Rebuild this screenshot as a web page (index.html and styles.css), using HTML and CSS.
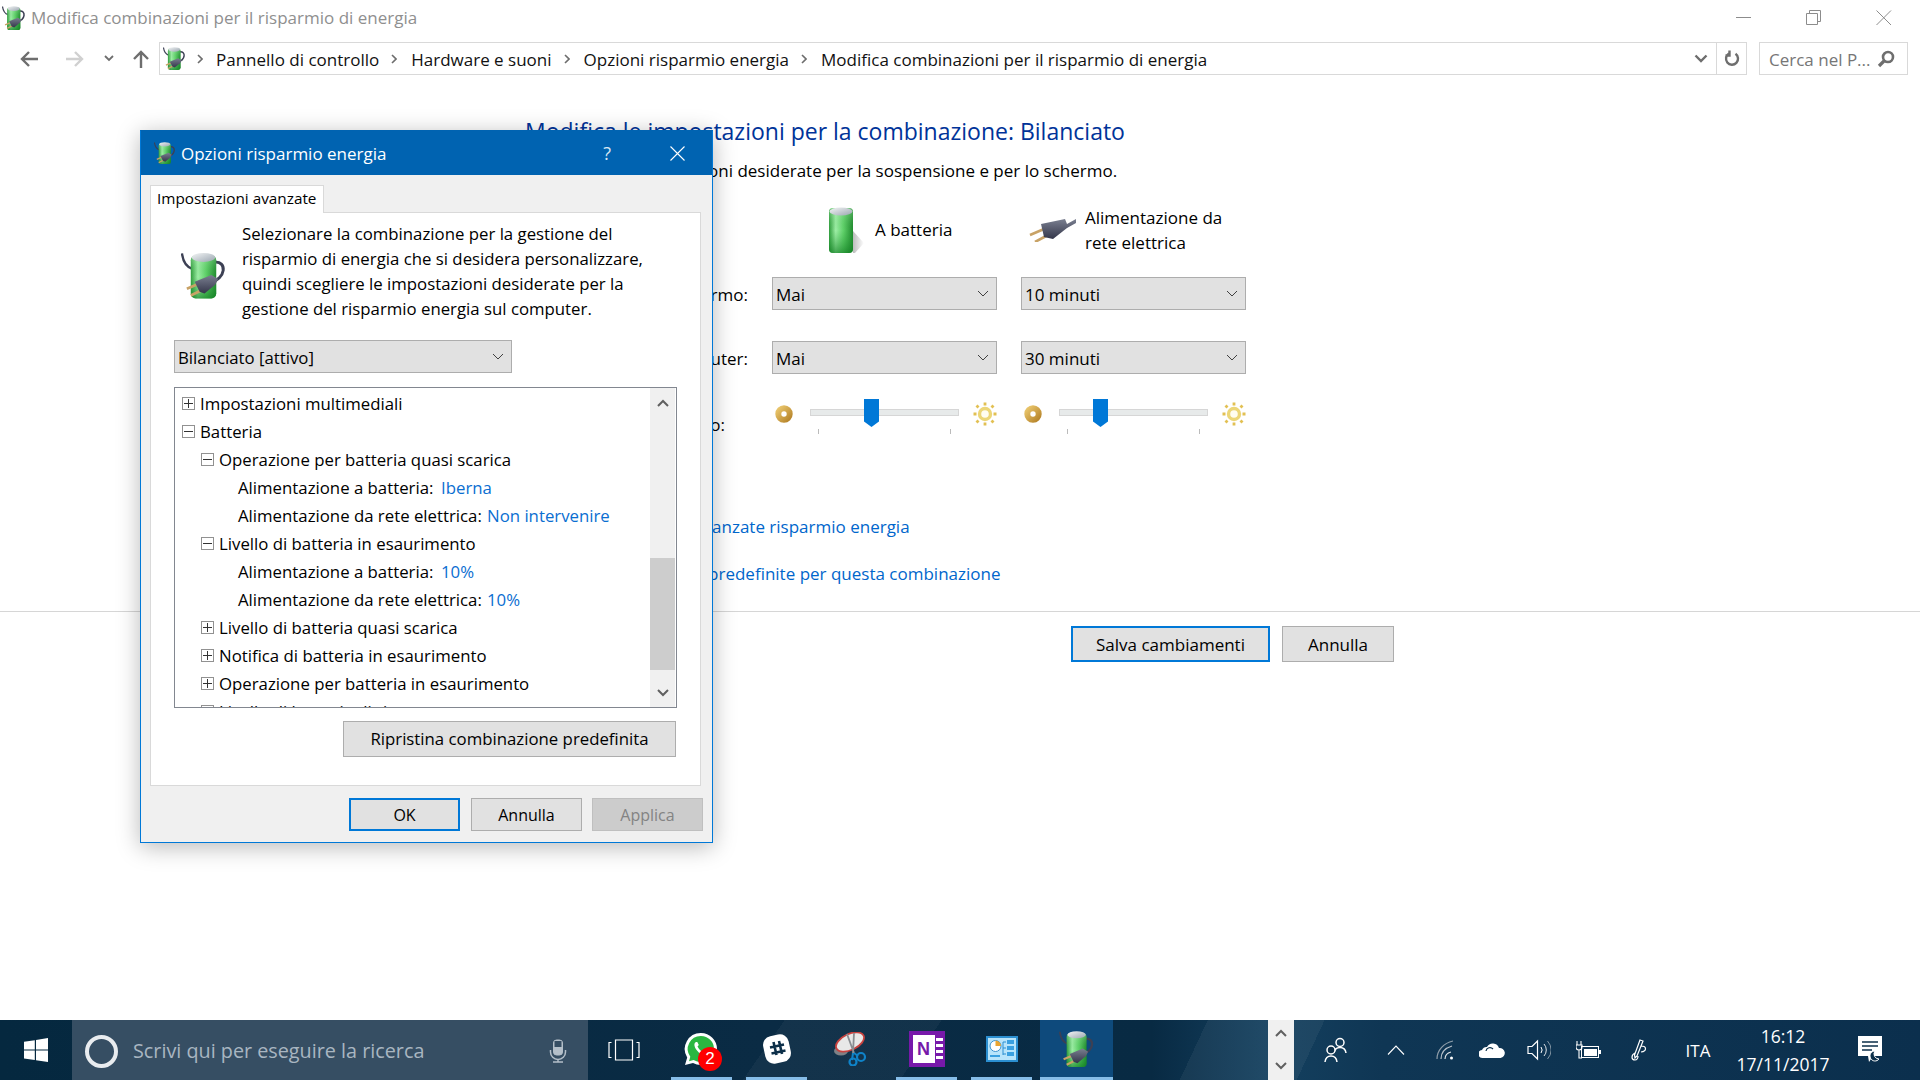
FILE: index.html
```html
<!DOCTYPE html>
<html lang="it">
<head>
<meta charset="utf-8">
<title>Modifica combinazioni per il risparmio di energia</title>
<link rel="stylesheet" href="styles.css">
</head>
<body>
<svg class="defs" aria-hidden="true">
  <defs>
    <linearGradient id="cell" x1="0" x2="1" y1="0" y2="0">
      <stop offset="0" stop-color="#2f9c3c"/><stop offset=".28" stop-color="#9eeea6"/><stop offset=".6" stop-color="#5fd069"/><stop offset="1" stop-color="#1f8a2d"/>
    </linearGradient>
    <linearGradient id="cellshade" x1="0" x2="0" y1="0" y2="1">
      <stop offset="0" stop-color="#d8ffd8" stop-opacity=".35"/><stop offset=".5" stop-color="#2aa23a" stop-opacity="0"/><stop offset="1" stop-color="#0d7a1f" stop-opacity=".65"/>
    </linearGradient>
    <linearGradient id="cap" x1="0" x2="1" y1="0" y2="1">
      <stop offset="0" stop-color="#f4f6f6"/><stop offset="1" stop-color="#9aa5b0"/>
    </linearGradient>
    <linearGradient id="plugbody" x1="0" x2="0" y1="0" y2="1">
      <stop offset="0" stop-color="#7a7f90"/><stop offset="1" stop-color="#34364a"/>
    </linearGradient>
    <linearGradient id="gold" x1="0" x2="1" y1="0" y2="1">
      <stop offset="0" stop-color="#e8c46a"/><stop offset="1" stop-color="#b8862c"/>
    </linearGradient>
    <linearGradient id="soft" x1="0" x2="1" y1="0" y2="0">
      <stop offset="0" stop-color="#bdbdbd"/><stop offset="1" stop-color="#fff"/>
    </linearGradient>
    <symbol id="power" viewBox="0 0 47 47">
      <path d="M1 1C2 9 6 15 12 17" fill="none" stroke="#3c4054" stroke-width="2.400"/>
      <path d="M34 10C47 8 47 27 29 31" fill="none" stroke="#3c4054" stroke-width="3"/>
      <rect x="10" y="3" width="26" height="44" rx="5" fill="url(#cell)"/>
      <rect x="10" y="3" width="26" height="44" rx="5" fill="url(#cellshade)"/>
      <ellipse cx="23" cy="5" rx="12" ry="4.600" fill="url(#cap)"/>
      <path d="M6 37L18 32M10 44L22 38" stroke="#c8a266" stroke-width="2.800"/>
      <path d="M14 30L31 23L38 27L35 33L24 42L19 40Z" fill="url(#plugbody)"/>
    </symbol>
    <symbol id="battery" viewBox="0 0 36 46">
      <path d="M25 24L36 36L27 46L25 46Z" fill="url(#soft)"/>
      <rect x="1" y="1" width="24" height="45" rx="4" fill="url(#cell)"/>
      <rect x="1" y="1" width="24" height="45" rx="4" fill="url(#cellshade)"/>
      <ellipse cx="13" cy="4.500" rx="11.500" ry="4" fill="url(#cap)"/>
    </symbol>
    <symbol id="plug" viewBox="0 0 47 24">
      <path d="M1 17L15 11M6 24L19 17" stroke="#c8a266" stroke-width="2.600"/>
      <path d="M12 6L36 1L38 6L47 1L47 5L38 10L24 21L15 19Z" fill="url(#plugbody)"/>
    </symbol>
    <symbol id="dim" viewBox="0 0 18 18">
      <circle cx="9" cy="9" r="5.700" fill="#fff" stroke="url(#gold)" stroke-width="6"/>
    </symbol>
    <symbol id="sun" viewBox="0 0 24 24">
      <circle cx="12" cy="12" r="5.500" fill="#fffdf0" stroke="#ecd677" stroke-width="3.400"/>
      <path d="M12 .5v3M12 20.500v3M.5 12h3M20.500 12h3M3.500 3.500l2 2M18.500 18.500l2 2M3.500 20.500l2-2M18.500 5.500l2-2" stroke="#e2c052" stroke-width="2.800"/>
    </symbol>
    <symbol id="caret" viewBox="0 0 12 7">
      <path d="M1 1l5 5 5-5" fill="none" stroke="#404040" stroke-width="1"/>
    </symbol>
    <symbol id="crumb" viewBox="0 0 6 10">
      <path d="M1 1l4 4-4 4" fill="none" stroke="#6d6d6d" stroke-width="1.600"/>
    </symbol>
    <symbol id="bold-up" viewBox="0 0 12 8">
      <path d="M1 7l5-5 5 5" fill="none" stroke="#606060" stroke-width="2"/>
    </symbol>
    <symbol id="bold-down" viewBox="0 0 12 8">
      <path d="M1 1l5 5 5-5" fill="none" stroke="#606060" stroke-width="2"/>
    </symbol>
  </defs>
</svg>

<div class="window">
  <header class="titlebar">
    <svg class="title-icon"><use href="#power"/></svg>
    <span class="title-text">Modifica combinazioni per il risparmio di energia</span>
    <div class="winctl">
      <svg class="ctl" viewBox="0 0 16 16"><path d="M0 7.500h15" stroke="#8c8c8c"/></svg>
      <svg class="ctl" viewBox="0 0 16 16"><path d="M.5 3.500h11v11H.5zM3.500 3.500V.5h11v11h-3" fill="none" stroke="#8c8c8c"/></svg>
      <svg class="ctl" viewBox="0 0 16 16"><path d="M.5.5l14.500 14.500M15 .5L.5 15" stroke="#8c8c8c"/></svg>
    </div>
  </header>

  <nav class="navbar">
    <svg class="nav-arrow back" viewBox="0 0 20 18"><path d="M19 9H3M10 2L3 9l7 7" fill="none" stroke="#6e6e6e" stroke-width="2.400"/></svg>
    <svg class="nav-arrow fwd" viewBox="0 0 20 18"><path d="M1 9h16M10 2l7 7-7 7" fill="none" stroke="#d0d0d0" stroke-width="2.400"/></svg>
    <svg class="nav-drop" viewBox="0 0 10 7"><path d="M1 1l4 4 4-4" fill="none" stroke="#6e6e6e" stroke-width="1.800"/></svg>
    <svg class="nav-up" viewBox="0 0 18 19"><path d="M9 19V3M2 10l7-7 7 7" fill="none" stroke="#6e6e6e" stroke-width="2.400"/></svg>
    <div class="addr">
      <svg class="addr-icon"><use href="#power"/></svg>
      <svg class="chev"><use href="#crumb"/></svg><span class="crumb">Pannello di controllo</span>
      <svg class="chev"><use href="#crumb"/></svg><span class="crumb">Hardware e suoni</span>
      <svg class="chev"><use href="#crumb"/></svg><span class="crumb">Opzioni risparmio energia</span>
      <svg class="chev"><use href="#crumb"/></svg><span class="crumb">Modifica combinazioni per il risparmio di energia</span>
      <svg class="addr-drop" viewBox="0 0 14 9"><path d="M1.500 1.500L7 7l5.500-5.500" fill="none" stroke="#6e6e6e" stroke-width="2.400"/></svg>
      <div class="addr-refresh">
        <svg class="refresh" viewBox="0 0 16 17"><path d="M5 3.500A6 6 0 1 0 11.500 3.800M5.500 .5v5h-4" fill="none" stroke="#6e6e6e" stroke-width="2.400"/></svg>
      </div>
    </div>
    <div class="search">
      <span class="search-text">Cerca nel P...</span>
      <svg class="search-icon" viewBox="0 0 18 18"><circle cx="11" cy="7" r="5" fill="none" stroke="#6e6e6e" stroke-width="2.600"/><path d="M7 11l-5 5" stroke="#6e6e6e" stroke-width="3.200"/></svg>
    </div>
  </nav>

  <main class="content">
    <h1 class="heading">Modifica le impostazioni per la combinazione: Bilanciato</h1>
    <p class="lead">Scegliere le impostazioni desiderate per la sospensione e per lo schermo.</p>
    <div class="plan">
      <div></div>
      <div class="head head-batt"><svg class="ico-batt"><use href="#battery"/></svg><span class="head-batt-text">A batteria</span></div>
      <div class="head head-plug"><svg class="ico-plug"><use href="#plug"/></svg><span>Alimentazione da<br>rete elettrica</span></div>

      <div class="plan-label">Disattiva schermo:</div>
      <div class="combo"><span>Mai</span><svg class="caret"><use href="#caret"/></svg></div>
      <div class="combo"><span>10 minuti</span><svg class="caret"><use href="#caret"/></svg></div>

      <div class="plan-label">Sospensione computer:</div>
      <div class="combo"><span>Mai</span><svg class="caret"><use href="#caret"/></svg></div>
      <div class="combo"><span>30 minuti</span><svg class="caret"><use href="#caret"/></svg></div>

      <div class="plan-label plan-label-low">Luminosità del piano:</div>
      <div class="bright">
        <svg class="ico-dim"><use href="#dim"/></svg>
        <div class="track"><i class="thumb thumb-a"></i><i class="tick tick-l"></i><i class="tick tick-r"></i></div>
        <svg class="ico-sun"><use href="#sun"/></svg>
      </div>
      <div class="bright">
        <svg class="ico-dim"><use href="#dim"/></svg>
        <div class="track"><i class="thumb thumb-b"></i><i class="tick tick-l"></i><i class="tick tick-r"></i></div>
        <svg class="ico-sun"><use href="#sun"/></svg>
      </div>
    </div>
    <a class="link link-a">Modifica impostazioni avanzate risparmio energia</a>
    <a class="link link-b">Ripristina impostazioni predefinite per questa combinazione</a>
  </main>

  <footer class="actions">
    <button class="btn btn-default btn-save">Salva cambiamenti</button>
    <button class="btn btn-cancel">Annulla</button>
  </footer>
</div>

<section class="dialog">
  <div class="dlg-title">
    <svg class="dlg-icon"><use href="#power"/></svg>
    <span class="dlg-name">Opzioni risparmio energia</span>
    <span class="dlg-help">?</span>
    <svg class="dlg-close" viewBox="0 0 15 15"><path d="M.5.5l14 14M14.500 .5l-14 14" stroke="#fff" stroke-width="1.100"/></svg>
  </div>
  <div class="dlg-body">
    <div class="tab">Impostazioni avanzate</div>
    <div class="panel">
      <div class="intro">
        <svg class="intro-icon"><use href="#power"/></svg>
        <p class="intro-text">Selezionare la combinazione per la gestione del<br>risparmio di energia che si desidera personalizzare,<br>quindi scegliere le impostazioni desiderate per la<br>gestione del risparmio energia sul computer.</p>
      </div>
      <div class="combo combo-plan"><span>Bilanciato [attivo]</span><svg class="caret"><use href="#caret"/></svg></div>
      <div class="tree">
        <div class="tree-list">
          <div class="row"><i class="exp plus"></i>Impostazioni multimediali</div>
          <div class="row"><i class="exp"></i>Batteria</div>
          <div class="row lvl2"><i class="exp"></i>Operazione per batteria quasi scarica</div>
          <div class="row lvl3"><span class="key key-a">Alimentazione a batteria:</span><span class="val">Iberna</span></div>
          <div class="row lvl3"><span class="key key-b">Alimentazione da rete elettrica:</span><span class="val">Non intervenire</span></div>
          <div class="row lvl2"><i class="exp"></i>Livello di batteria in esaurimento</div>
          <div class="row lvl3"><span class="key key-a">Alimentazione a batteria:</span><span class="val">10%</span></div>
          <div class="row lvl3"><span class="key key-b">Alimentazione da rete elettrica:</span><span class="val">10%</span></div>
          <div class="row lvl2"><i class="exp plus"></i>Livello di batteria quasi scarica</div>
          <div class="row lvl2"><i class="exp plus"></i>Notifica di batteria in esaurimento</div>
          <div class="row lvl2"><i class="exp plus"></i>Operazione per batteria in esaurimento</div>
          <div class="row lvl2"><i class="exp plus"></i>Livello di batteria di riserva</div>
        </div>
        <div class="vscroll">
          <div class="vs-up"><svg class="vs-arrow"><use href="#bold-up"/></svg></div>
          <div class="vs-thumb"></div>
          <div class="vs-down"><svg class="vs-arrow"><use href="#bold-down"/></svg></div>
        </div>
      </div>
      <button class="btn btn-restore">Ripristina combinazione predefinita</button>
    </div>
    <div class="dlg-actions">
      <button class="btn btn-default btn-dlg btn-ok">OK</button>
      <button class="btn btn-dlg">Annulla</button>
      <button class="btn btn-dlg btn-disabled">Applica</button>
    </div>
  </div>
</section>

<div class="taskbar">
  <div class="start">
    <svg class="win-logo" viewBox="0 0 24 24"><path d="M0 3.800L10.800 2.200V11.500H0zM12 2L24 0V11.500H12zM0 12.600H10.800V22L0 20.400zM12 12.600H24V24L12 22.200z" fill="#fff"/></svg>
  </div>
  <div class="tb-search">
    <i class="cortana"></i>
    <span class="tb-search-text">Scrivi qui per eseguire la ricerca</span>
    <svg class="mic" viewBox="0 0 18 24"><rect x="4.500" y="1" width="9" height="15" rx="3" fill="#b4bfc9" stroke="#b4bfc9"/><rect x="5.500" y="2" width="7" height="6" fill="#364e63"/><path d="M1.500 11v2a7.500 7.500 0 0 0 15 0v-2M9 20.500V23M4 23h10" fill="none" stroke="#b4bfc9" stroke-width="1.500"/></svg>
  </div>
  <div class="taskview">
    <svg class="tv-icon" viewBox="0 0 32 22"><path d="M3.500 3.500H1V18.500H3.500M28.500 3.500H31V18.500H28.500M7.500 1H24.500V21H7.500Z" fill="none" stroke="#fff" stroke-width="1.200"/></svg>
  </div>
  <div class="tiles">
    <div class="tile open">
      <svg class="t-wa" viewBox="0 0 34 34"><path d="M17 1a16 16 0 0 1 0 32c-3 0-5.500-.8-8-2L1 33l2.200-7.500A16 16 0 0 1 17 1z" fill="#fff"/><path d="M17 4a13 13 0 0 1 0 26c-2.800 0-5-.7-7.400-2L5 29.300l1.300-4.600A13 13 0 0 1 17 4z" fill="#2bb741"/><path d="M12 10c-2 1-2.500 4 1 8.500s7.500 6 9.500 4.500c1.500-1 1.500-2.500 1-3l-3-1.500-1.500 1.500c-1.500-.3-4.500-3.300-5.500-5.500l1.300-1.500-1.500-3z" fill="#fff"/></svg>
      <span class="badge">2</span>
    </div>
    <div class="tile open">
      <svg class="t-slack" viewBox="0 0 28 34"><rect x="1" y="3" width="26" height="28" rx="9" fill="#fff" transform="rotate(-12 14 17)"/><path d="M10.500 10l3 13M16 9l3 13M7 15.500l14-3M8.500 21.500l14-3" stroke="#0c2f49" stroke-width="2.600"/></svg>
    </div>
    <div class="tile plain">
      <svg class="t-snip" viewBox="0 0 33 34"><ellipse cx="7" cy="19" rx="7" ry="4.500" fill="#7e8186"/><ellipse cx="16" cy="10" rx="15" ry="8" transform="rotate(-25 16 10)" fill="#e8e8e8" stroke="#c8423f" stroke-width="1.800"/><path d="M13 2l7 19M20 1l-1 20" stroke="#8a8d92" stroke-width="1.800"/><path d="M20 21l4 3M19 21l-1 7" stroke="#0f83c9" stroke-width="2"/><circle cx="27" cy="25" r="4" fill="none" stroke="#0f83c9" stroke-width="2.200"/><circle cx="19" cy="30" r="3.500" fill="none" stroke="#0f83c9" stroke-width="2.200"/></svg>
    </div>
    <div class="tile open">
      <div class="t-one"><span class="one-page">N</span><i class="one-tabs"></i></div>
    </div>
    <div class="tile open">
      <svg class="t-cp" viewBox="0 0 32 26"><rect x="1" y="1" width="30" height="24" fill="#b7e4fb" stroke="#2b8fd1" stroke-width="2"/><circle cx="9.500" cy="10" r="5.500" fill="#fff" stroke="#3b92cf"/><path d="M9.500 10V4.500A5.500 5.500 0 0 1 15 10z" fill="#eaa531"/><path d="M17 6h3M17 6v13M17 12h3M17 18h3" stroke="#2b8fd1"/><rect x="21" y="4" width="7" height="4" fill="#3aa0e0"/><rect x="21" y="10" width="7" height="4" fill="#3aa0e0"/><rect x="21" y="16" width="7" height="4" fill="#3aa0e0"/><rect x="4" y="19" width="10" height="2" fill="#3aa0e0"/></svg>
    </div>
    <div class="tile open active">
      <svg class="t-power"><use href="#power"/></svg>
    </div>
  </div>
  <div class="tb-scroll">
    <svg class="tb-arrow"><use href="#bold-up"/></svg>
    <svg class="tb-arrow"><use href="#bold-down"/></svg>
  </div>
  <div class="tray">
    <div class="tr w60"><svg class="i-people" viewBox="0 0 24 26"><circle cx="16" cy="5.500" r="4" fill="none" stroke="#fff" stroke-width="1.500"/><path d="M10 16c.5-4 2-5.500 6-5.500s5.500 1.500 6 5.500" fill="none" stroke="#fff" stroke-width="1.500"/><circle cx="7" cy="13" r="4" fill="#0c2f49" stroke="#fff" stroke-width="1.500"/><path d="M1 25c.5-4 2-6 6-6s5.500 2 6 6" fill="none" stroke="#fff" stroke-width="1.500"/></svg></div>
    <div class="tr w60"><svg class="i-up" viewBox="0 0 18 10"><path d="M1 9.500l8-8.500 8 8.500" fill="none" stroke="#fff" stroke-width="1.100"/></svg></div>
    <div class="tr w38"><svg class="i-wifi" viewBox="0 0 18 20"><path d="M1 19C1 10 8 3 17 1" fill="none" stroke="#8f9eaa" stroke-width="1.200"/><path d="M5 19C5 13 9 8 16 6" fill="none" stroke="#b7c1ca" stroke-width="1.200"/><path d="M9 19c0-3 2-6 6-7" fill="none" stroke="#dfe4e8" stroke-width="1.200"/><circle cx="15.500" cy="18" r="1.500" fill="#fff"/></svg></div>
    <div class="tr w56"><svg class="i-cloud" viewBox="0 0 26 18"><path d="M4 17a4 4 0 0 1-1-8 5 5 0 0 1 5-3A6.500 6.500 0 0 1 20 7a5 5 0 0 1 1.500 10z" fill="#fff"/><path d="M7 10a4 4 0 0 1 7-2" fill="none" stroke="#0c2f49" stroke-width="1.200"/></svg></div>
    <div class="tr w38"><svg class="i-sound" viewBox="0 0 24 22"><path d="M1 7.500H5L10.500 2V20L5 14.500H1Z" fill="none" stroke="#fff" stroke-width="1.200"/><path d="M14 8a5 5 0 0 1 0 6" fill="none" stroke="#fff"/><path d="M17 5a9 9 0 0 1 0 12" fill="none" stroke="#dfe4e8"/><path d="M20.500 2a13 13 0 0 1 0 18" fill="none" stroke="#8395a4"/></svg></div>
    <div class="tr w60"><svg class="i-batt" viewBox="0 0 25 20"><rect x="5.500" y="6.500" width="17" height="11" fill="none" stroke="#fff"/><rect x="8" y="9" width="13" height="7" fill="#fff"/><rect x="23" y="10" width="2" height="4" fill="#fff"/><path d="M1 1v4M5 1v4M0 5h6v2a3 3 0 0 1-6 0zM3 10v8h3" fill="none" stroke="#fff" stroke-width="1.100"/></svg></div>
    <div class="tr w42"><svg class="i-pen" viewBox="0 0 16 22"><path d="M9 1l3 1-6 15-2 2-.5-3zM10 7c6 0 6 5 0 6M4 14c-4 2-4 7 0 7 2 0 3-2 3-4" fill="none" stroke="#fff" stroke-width="1.200"/></svg></div>
    <div class="tr w76 tr-text">ITA</div>
    <div class="tr w94 clock"><span>16:12</span><span>17/11/2017</span></div>
    <div class="tr w80"><svg class="i-action" viewBox="0 0 24 28"><path d="M0 0H24V20H15L11 26 10 20H0Z" fill="#fff"/><path d="M4 6H20M4 10H20M4 14H14" stroke="#0c2f49" stroke-width="1.300"/><path d="M17 15a5 5 0 1 0 4 8 5 5 0 0 1-4-8z" fill="#0c2f49" stroke="#fff"/></svg></div>
  </div>
</div>
</body>
</html>
```
FILE: styles.css
```css
* { box-sizing: border-box; }
html, body { margin: 0; height: 100%; }
body {
  width: 1920px; height: 1080px; overflow: hidden; position: relative;
  display: flex; flex-direction: column; background: #fff; color: #000;
  font: 17px/25px "Open Sans", "Noto Sans", sans-serif;
}
.defs { display: block; width: 0; height: 0; }
svg { display: block; flex: none; }
p, h1 { margin: 0; }

/* main window */
.window { height: 1020px; display: flex; flex-direction: column; }
.titlebar { height: 36px; display: flex; align-items: center; padding-left: 2px; flex: none; }
.title-icon { width: 24px; height: 24px; }
.title-text { margin: -1px 0 0 5px; color: #8f8f8f; }
.winctl { margin-left: auto; display: flex; gap: 54px; padding-right: 28px; }
.ctl { width: 16px; height: 16px; }

.navbar { height: 33px; margin-top: 6px; display: flex; align-items: center; padding-left: 19px; flex: none; }
.nav-arrow { width: 20px; height: 18px; }
.fwd { margin-left: 26px; }
.nav-drop { width: 10px; height: 7px; margin-left: 19px; }
.nav-up { width: 18px; height: 19px; margin-left: 18px; }
.addr { width: 1588px; height: 33px; margin-left: 9px; border: 1px solid #d9d9d9; display: flex; align-items: center; padding-left: 3px; }
.addr-icon { width: 23px; height: 23px; }
.chev { width: 6px; height: 10px; margin: 0 14px 0 12px; }
.addr-icon + .chev { margin: 0 13px 0 11px; }
.crumb { color: #111; padding-top: 1px; }
.addr-drop { width: 14px; height: 9px; margin-left: auto; margin-right: 8px; }
.addr-refresh { width: 30px; height: 100%; border-left: 1px solid #d9d9d9; display: flex; align-items: center; justify-content: center; }
.refresh { width: 16px; height: 17px; }
.search { width: 149px; height: 33px; margin-left: 12px; border: 1px solid #d9d9d9; display: flex; align-items: center; padding: 0 12px 0 9px; justify-content: space-between; }
.search-text { color: #767676; white-space: nowrap; padding-top: 1px; }
.search-icon { width: 18px; height: 18px; }

.content { height: 536px; padding-top: 40px; padding-left: 525px; flex: none; }
.heading { font-size: 23px; line-height: 32px; font-weight: 400; color: #003399; }
.lead { margin-top: 12px; line-height: 24px; margin-left: 13px; }
.plan { margin-top: 18px; display: grid; grid-template-columns: 223px 225px 225px; column-gap: 24px; grid-template-rows: 76px 64px 58px 116px; }
.head { height: 58px; display: flex; align-items: center; }
.head-batt { padding-left: 56px; gap: 11px; }
.head-batt-text { margin-top: -2px; }
.head-plug { padding-left: 8px; gap: 9px; }
.ico-batt { width: 36px; height: 46px; }
.ico-plug { width: 47px; height: 24px; }
.plan-label { text-align: right; line-height: 35px; white-space: nowrap; }
.plan-label-low { padding-right: 23px; line-height: 52px; }
.combo { height: 33px; background: #e1e1e1; border: 1px solid #adadad; display: flex; align-items: center; justify-content: space-between; padding: 1px 7px 0 3px; }
.caret { width: 12px; height: 7px; margin-top: -1px; }
.bright { display: flex; align-items: flex-start; height: 36px; }
.ico-dim { width: 18px; height: 18px; margin: 6px 0 0 3px; }
.ico-sun { width: 24px; height: 24px; margin: 3px 0 0 14px; }
.track { width: 149px; height: 7px; margin: 10px 0 0 17px; background: #e7eaea; border: 1px solid #d6d6d6; position: relative; }
.thumb { position: absolute; top: -11px; width: 15px; height: 28px; background: #0078d7; clip-path: polygon(0 0, 100% 0, 100% 80%, 50% 100%, 0 80%); }
.thumb-a { left: 53px; }
.thumb-b { left: 33px; }
.tick { position: absolute; top: 19px; width: 1px; height: 5px; background: #bbb; }
.tick-l { left: 7px; }
.tick-r { left: 139px; }
.link { display: block; color: #0066cc; line-height: 24px; }
.link-a { margin-left: -9px; }
.link-b { margin-top: 23px; margin-left: -2px; }
.actions { height: 448px; border-top: 1px solid #d6d6d6; padding: 14px 0 0 1071px; display: flex; align-items: flex-start; gap: 12px; }
.btn { font: inherit; color: #000; background: #e1e1e1; border: 1px solid #adadad; padding: 1px 0 0; height: 33px; line-height: 1; }
.btn-default { border: 2px solid #0078d7; }
.btn-save { width: 199px; height: 36px; }
.btn-cancel { width: 112px; height: 36px; }

/* dialog */
.dialog { position: absolute; left: 140px; top: 130px; width: 573px; height: 713px; background: #f0f0f0; border: 1px solid #0078d7; border-top-color: #0063b1; box-shadow: 0 4px 22px rgba(0,0,0,.28); display: flex; flex-direction: column; }
.dlg-title { height: 44px; background: #0063b1; display: flex; align-items: center; padding-left: 13px; color: #fff; flex: none; }
.dlg-icon { width: 22px; height: 24px; }
.dlg-name { margin-left: 5px; }
.dlg-help { margin-left: auto; margin-right: 59px; font-size: 18px; color: #d9e7f3; }
.dlg-close { width: 15px; height: 15px; margin-right: 27px; }
.dlg-body { padding: 10px 9px 0 9px; flex: 1; display: flex; flex-direction: column; }
.tab { width: 174px; height: 28px; background: #fff; border: 1px solid #d9d9d9; border-bottom: 0; line-height: 24px; font-size: 15.3px; padding-left: 6px; position: relative; z-index: 1; margin-bottom: -1px; white-space: nowrap; }
.panel { width: 551px; height: 574px; background: #fff; border: 1px solid #d9d9d9; padding: 8px 23px 0 23px; display: flex; flex-direction: column; font-size: 16.8px; }
.intro { display: flex; padding-left: 7px; gap: 15px; height: 100px; }
.intro-icon { width: 46px; height: 47px; margin-top: 31px; }
.intro-text { white-space: nowrap; }
.combo-plan { width: 338px; height: 33px; margin-top: 19px; }
.tree { width: 503px; height: 321px; margin-top: 14px; border: 1px solid #828790; display: flex; overflow: hidden; flex: none; }
.tree-list { flex: 1; padding: 1px 0 0 7px; overflow: hidden; }
.row { height: 28px; display: flex; align-items: center; white-space: nowrap; }
.lvl2 { padding-left: 19px; }
.lvl3 { padding-left: 56px; }
.exp { width: 13px; height: 13px; border: 1px solid #919191; position: relative; margin-right: 5px; flex: none; }
.exp::before { content: ""; position: absolute; left: 1px; right: 1px; top: 5px; height: 1px; background: #333; }
.plus::after { content: ""; position: absolute; top: 1px; bottom: 1px; left: 5px; width: 1px; background: #333; }
.key { flex: none; }
.key-a { width: 203px; }
.key-b { width: 249px; }
.val { color: #0a6ed1; }
.vscroll { width: 25px; background: #f0f0f0; display: flex; flex-direction: column; flex: none; margin-right: 1px; }
.vs-up { height: 32px; display: flex; align-items: center; justify-content: center; padding-bottom: 2px; }
.vs-thumb { height: 112px; background: #cdcdcd; margin-top: 138px; flex: none; }
.vs-down { flex: 1; display: flex; align-items: center; justify-content: center; padding-top: 8px; }
.vs-arrow { width: 12px; height: 8px; }
.btn-restore { width: 333px; height: 36px; margin-top: 13px; margin-left: 169px; flex: none; }
.dlg-actions { display: flex; justify-content: flex-end; gap: 10px; margin-top: 12px; }
.btn-dlg { width: 111px; height: 33px; font-size: 16px; padding-top: 0; }
.btn-ok { margin-right: 1px; }
.btn-disabled { background: #ccc; border-color: #bfbfbf; color: #838383; }

/* taskbar */
.taskbar {
  height: 60px; display: flex; flex: none; color: #fff;
  background:
    linear-gradient(115deg, rgba(255,255,255,0) 0 62%, rgba(255,255,255,.05) 62% 68%, rgba(255,255,255,0) 68%),
    linear-gradient(125deg, rgba(255,255,255,0) 0 40%, rgba(255,255,255,.04) 40% 48%, rgba(255,255,255,0) 48%),
    linear-gradient(90deg, #05283f 0, #0a2b44 40%, #082a43 60%, #14405f 66%, #0f3654 72%, #0b2f4d 100%);
}
.start { width: 72px; display: flex; align-items: center; justify-content: center; }
.win-logo { width: 24px; height: 24px; }
.tb-search { width: 516px; background: #364e63; display: flex; align-items: center; padding-left: 13px; }
.cortana { width: 33px; height: 33px; border-radius: 50%; border: 4px solid #e9ecef; margin-top: 3px; flex: none; }
.tb-search-text { margin-left: 15px; color: #a9b6c1; font-size: 19.8px; margin-top: 1px; white-space: nowrap; }
.mic { width: 18px; height: 24px; margin-left: auto; margin-right: 21px; margin-top: 1px; }
.taskview { width: 72px; display: flex; align-items: center; justify-content: center; }
.tv-icon { width: 32px; height: 22px; }
.tiles { display: flex; gap: 14px; margin-left: 11px; }
.tile { width: 61px; height: 60px; position: relative; display: flex; align-items: center; justify-content: center; border-bottom: 3px solid transparent; }
.tile.open { border-bottom-color: #86bde8; }
.tile.active { width: 73px; margin-left: -6px; background: #0e4a7c; }
.t-wa { width: 34px; height: 34px; margin-right: 2px; }
.badge { position: absolute; left: 27px; top: 27px; width: 24px; height: 24px; border-radius: 50%; background: #f00; color: #fff; font: 17px/24px "Liberation Sans", sans-serif; text-align: center; }
.t-slack { width: 28px; height: 34px; }
.t-snip { width: 33px; height: 34px; margin-left: -2px; }
.t-one { width: 36px; height: 36px; background: #7719aa; position: relative; display: flex; align-items: center; }
.one-page { margin-left: 4px; width: 22px; height: 28px; background: #fff; color: #7719aa; font: 700 18px/28px "Liberation Sans", sans-serif; text-align: center; }
.one-tabs { width: 7px; height: 22px; background: repeating-linear-gradient(#fff 0 3px, transparent 3px 6px); margin-left: 1px; }
.t-cp { width: 32px; height: 26px; }
.t-power { width: 36px; height: 38px; }
.tb-scroll { width: 26px; margin-left: 155px; background: #f0f0f0; display: flex; flex-direction: column; align-items: center; justify-content: space-between; padding: 9px 0 10px; }
.tb-arrow { width: 12px; height: 8px; }
.tray { display: flex; padding-left: 12px; }
.tr { display: flex; align-items: center; justify-content: center; height: 60px; flex: none; }
.w38 { width: 38px; } .w42 { width: 42px; } .w56 { width: 56px; } .w60 { width: 60px; }
.w76 { width: 76px; } .w80 { width: 80px; } .w94 { width: 94px; }
.tr-text { font-size: 17px; }
.i-people { width: 24px; height: 26px; }
.i-up { width: 18px; height: 10px; }
.i-wifi { width: 18px; height: 20px; }
.i-cloud { width: 26px; height: 18px; }
.i-sound { width: 24px; height: 22px; }
.i-batt { width: 25px; height: 20px; }
.i-pen { width: 16px; height: 22px; }
.i-action { width: 24px; height: 28px; }
.clock { flex-direction: column; line-height: 28px; font-size: 17.5px; }
```
